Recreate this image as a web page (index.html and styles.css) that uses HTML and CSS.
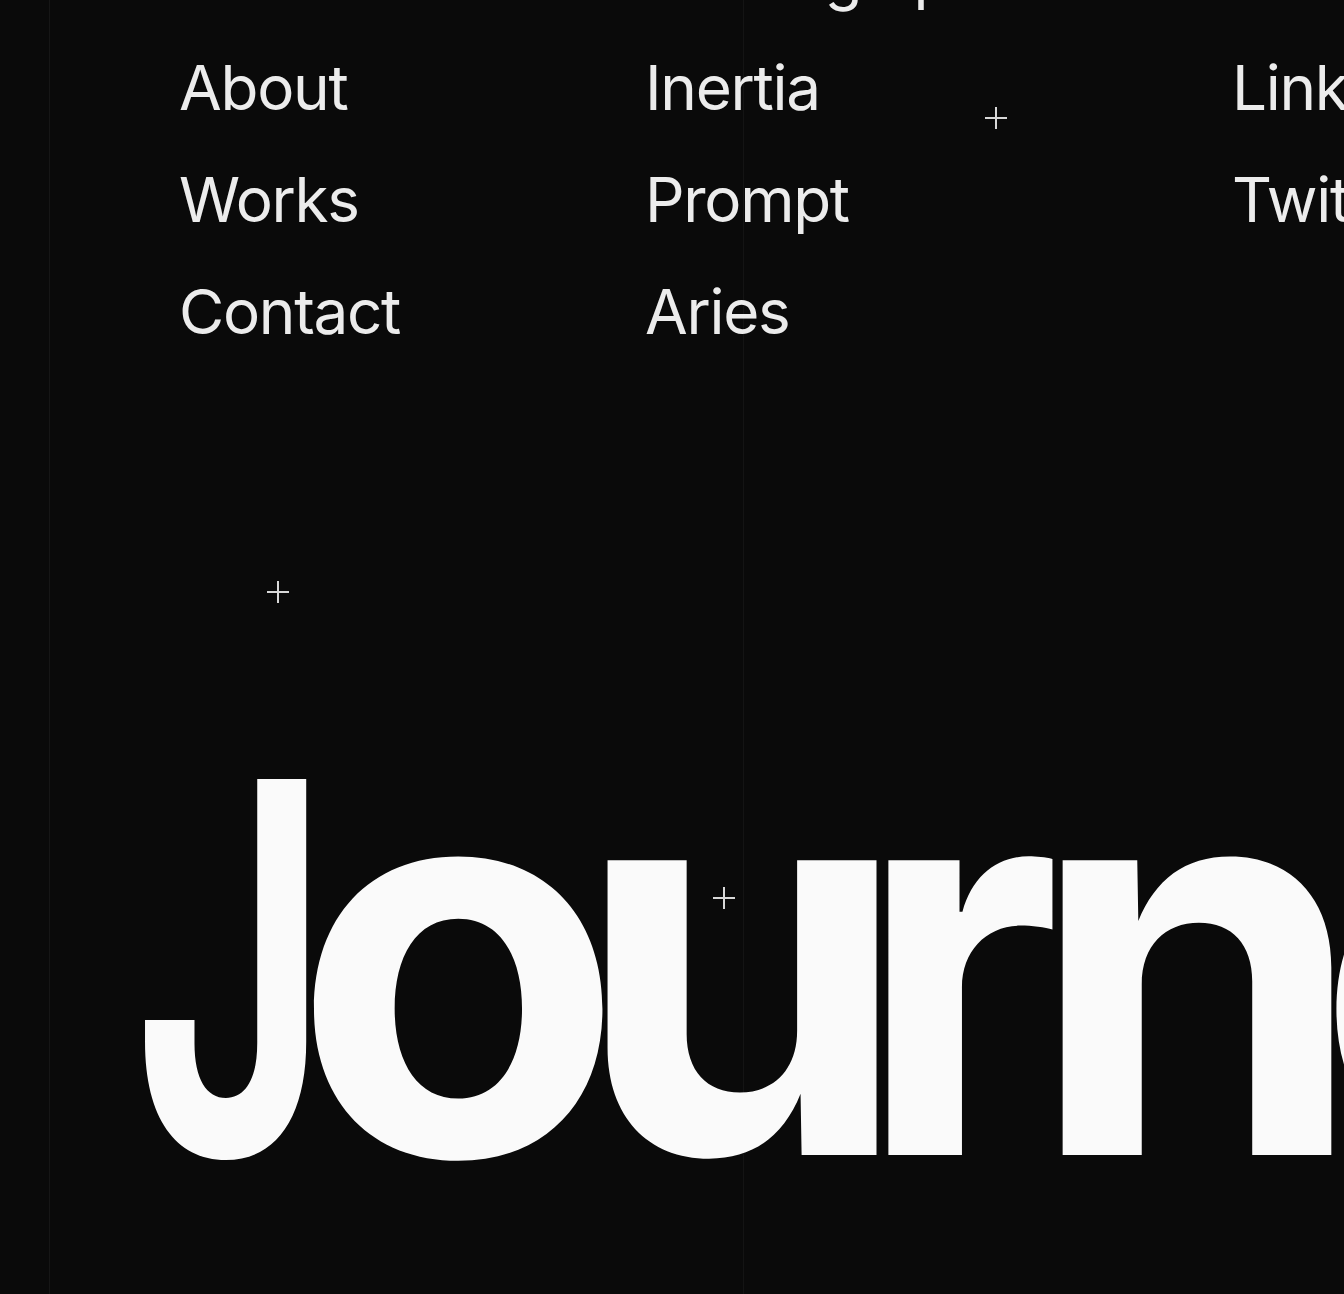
FILE: index.html
```html
<!DOCTYPE html>
<html lang="en">
<head>
<meta charset="utf-8">
<title>Journey</title>
<link rel="stylesheet" href="styles.css">
</head>
<body>
<div class="page">
  <div class="kicker"><span>Moving up</span></div>

  <nav class="menu">
    <ul class="col col-1">
      <li><a href="#">About</a></li>
      <li><a href="#">Works</a></li>
      <li><a href="#">Contact</a></li>
    </ul>
    <ul class="col col-2">
      <li><a href="#">Inertia</a></li>
      <li><a href="#">Prompt</a></li>
      <li><a href="#">Aries</a></li>
    </ul>
    <ul class="col col-3">
      <li><a href="#">LinkedIn</a></li>
      <li><a href="#">Twitter</a></li>
    </ul>
  </nav>

  <h1 class="hero"><span class="hero-j">J</span>ou<span class="hero-r">r</span>ney</h1>

  <span class="plus plus-1"></span>
  <span class="plus plus-2"></span>
  <span class="plus plus-3"></span>
</div>
</body>
</html>
```

FILE: styles.css
```css
* { box-sizing: border-box; }
html, body {
  margin: 0;
  padding: 0;
  background: #0a0a0a;
}
body {
  font-family: Inter, "Noto Sans", sans-serif;
  color: #ececec;
  overflow: hidden;
}
.page {
  position: relative;
  width: 1344px;
  height: 1294px;
  overflow: hidden;
  background-color: #0a0a0a;
  background-image:
    linear-gradient(to right, transparent 49px, #161616 49px, #161616 50px, transparent 50px),
    linear-gradient(to right, transparent 743px, #141414 743px, #141414 744px, transparent 744px);
}

.kicker {
  margin-top: -80px;
  padding-left: 651px;
  font-size: 62px;
  line-height: 112px;
  white-space: nowrap;
  letter-spacing: -1px;
}
.menu {
  display: grid;
  grid-template-columns: 466px 587px 1fr;
  padding-left: 179px;
}
.col {
  list-style: none;
  margin: 0;
  padding: 0;
}
.col li {
  font-size: 62px;
  line-height: 112px;
  white-space: nowrap;
  letter-spacing: -1.3px;
}
.col a {
  color: #ececec;
  text-decoration: none;
}
.hero {
  margin: 321px 0 0 0;
  padding-left: 134px;
  font-size: 540px;
  font-weight: 700;
  line-height: 1;
  letter-spacing: -50px;
  color: #fafafa;
  white-space: nowrap;
}
.hero-j {
  display: inline-block;
  transform: scale(0.615, 0.957);
  transform-origin: left 466px;
  margin-right: -107px;
}
.hero-r {
  display: inline-block;
  transform: scaleX(0.93);
  transform-origin: left center;
  margin-left: -3px;
  margin-right: 2px;
}
.plus {
  position: absolute;
  width: 22px;
  height: 22px;
}
.plus::before, .plus::after {
  content: "";
  position: absolute;
  background: #d8d8d8;
}
.plus::before { left: 0; right: 0; top: 10px; height: 1.5px; }
.plus::after { top: 0; bottom: 0; left: 10px; width: 1.5px; }
.plus-1 { left: 985px; top: 107px; }
.plus-2 { left: 267px; top: 581px; }
.plus-3 { left: 713px; top: 887px; }
```
